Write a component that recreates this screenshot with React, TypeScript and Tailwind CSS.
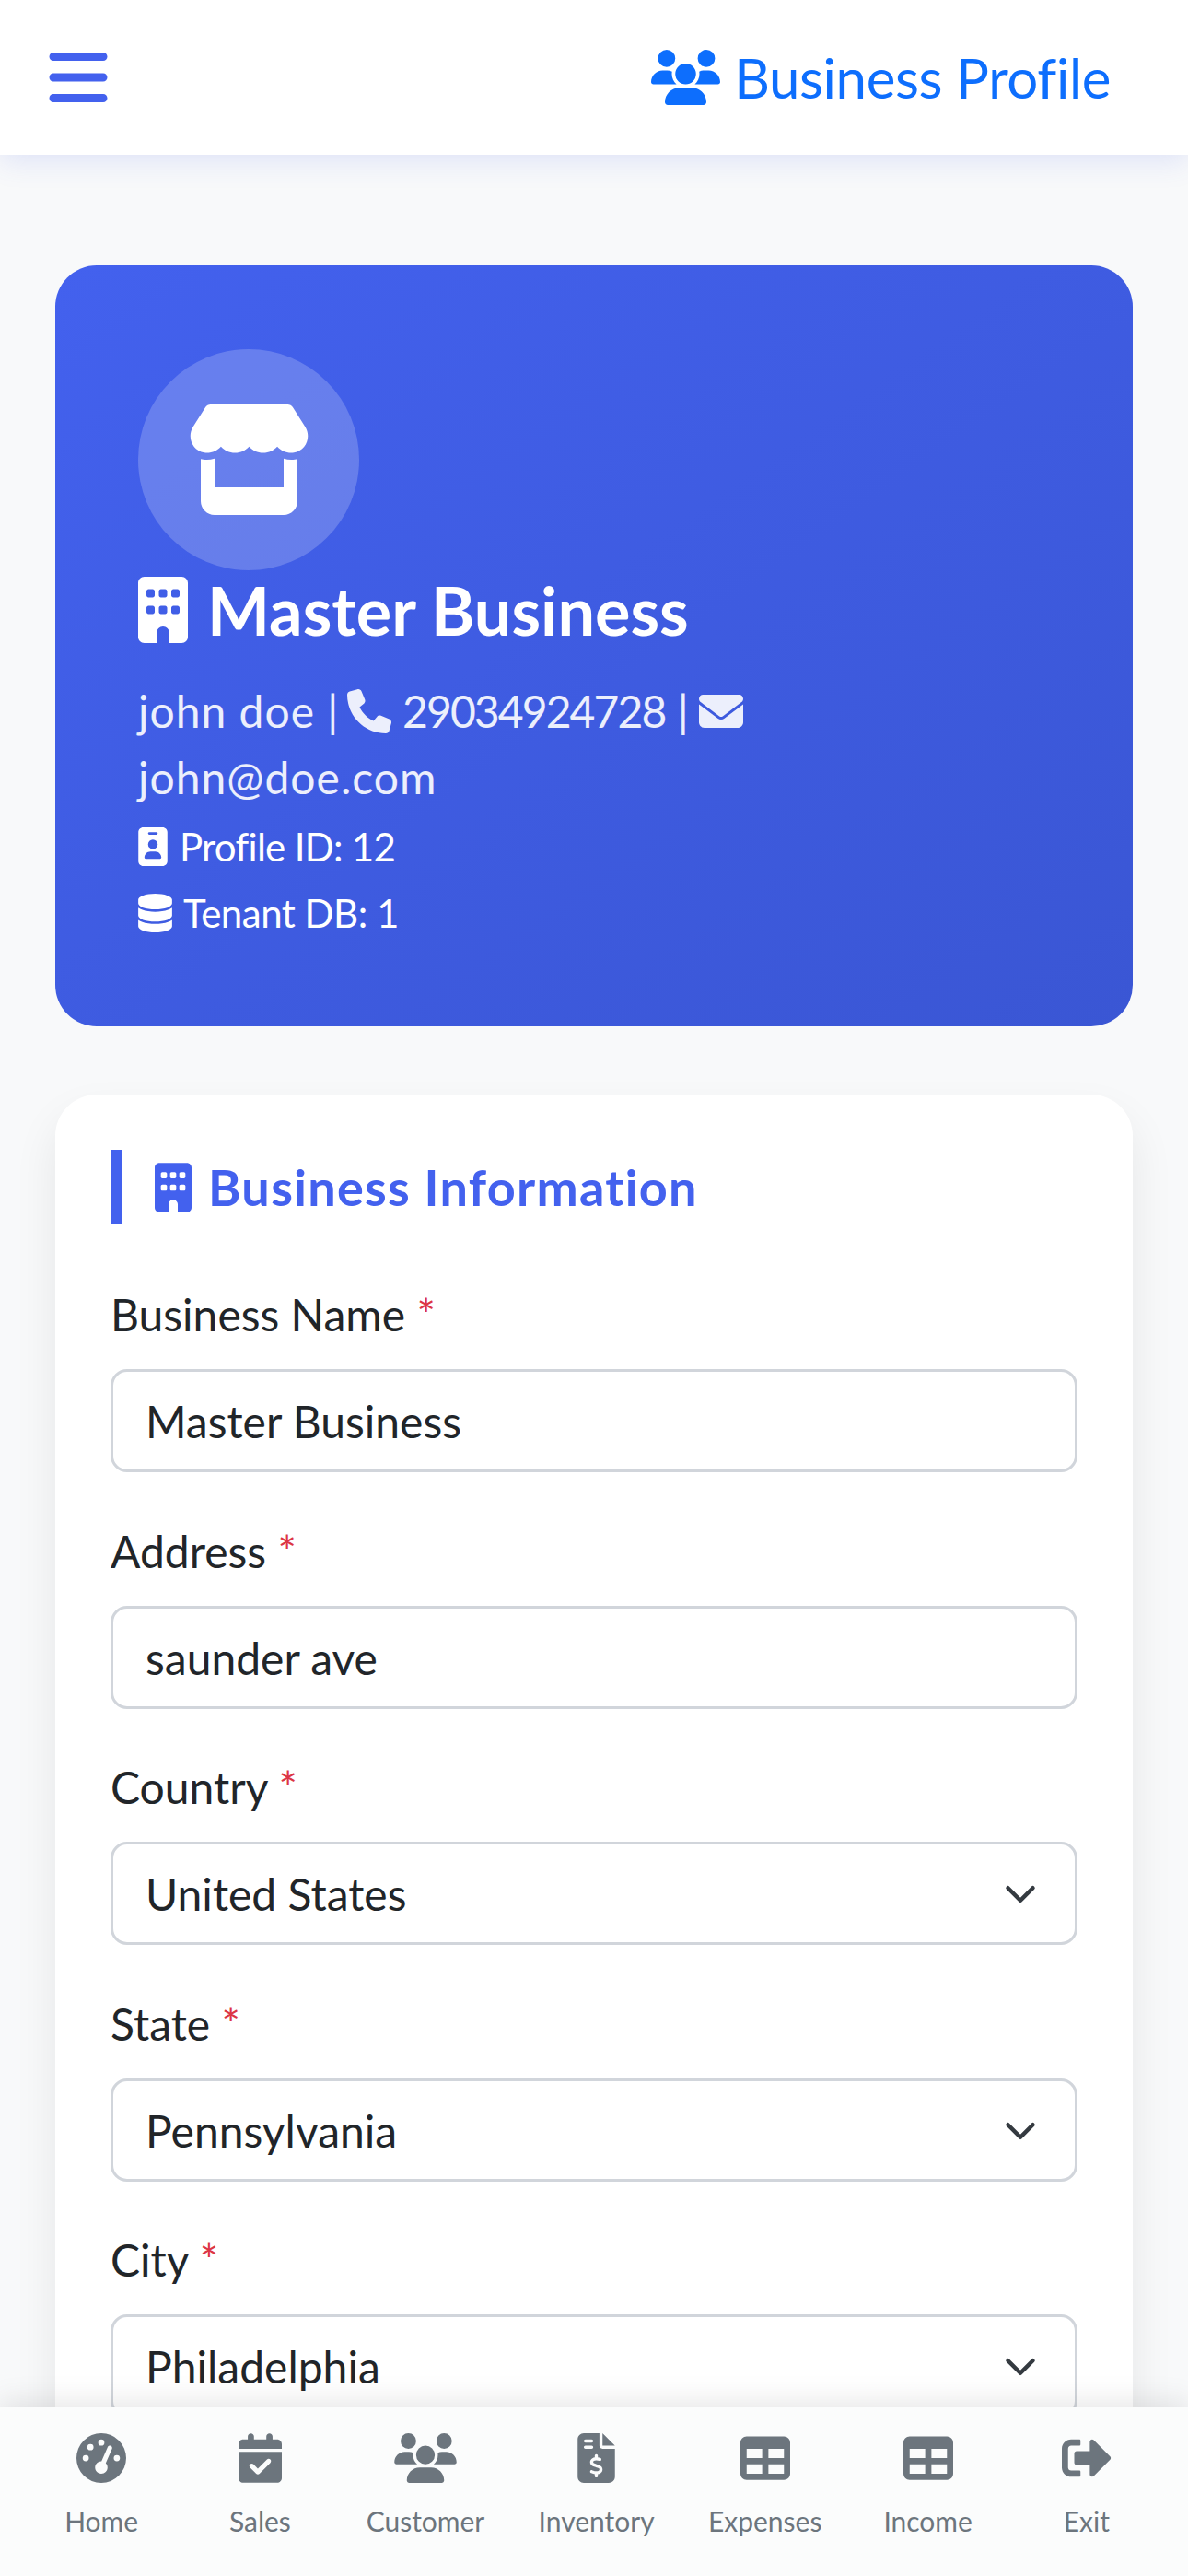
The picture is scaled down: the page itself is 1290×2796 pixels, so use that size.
import React from "react";
import {
  FaBars,
  FaBuilding,
  FaCalendarCheck,
  FaDatabase,
  FaEnvelope,
  FaFileInvoiceDollar,
  FaGaugeHigh,
  FaIdBadge,
  FaPhone,
  FaStore,
  FaTable,
  FaUsers,
} from "react-icons/fa6";
import { FaSignOutAlt } from "react-icons/fa";

// Page is a 430px mobile layout captured at 3x, so every number here is css px * 3
const FIELDS = [
  { label: "Business Name", value: "Master Business", select: false },
  { label: "Address", value: "saunder ave", select: false },
  { label: "Country", value: "United States", select: true },
  { label: "State", value: "Pennsylvania", select: true },
  { label: "City", value: "Philadelphia", select: true },
];

const NAV_ITEMS = [
  { label: "Home", icon: FaGaugeHigh, size: "w-[54px]" },
  { label: "Sales", icon: FaCalendarCheck, size: "w-[47px]" },
  { label: "Customer", icon: FaUsers, size: "w-[68px]" },
  { label: "Inventory", icon: FaFileInvoiceDollar, size: "w-[41px]" },
  { label: "Expenses", icon: FaTable, size: "w-[54px]" },
  { label: "Income", icon: FaTable, size: "w-[54px]" },
  { label: "Exit", icon: FaSignOutAlt, size: "w-[54px]" },
];

const Chevron = () => (
  <svg viewBox="0 0 16 16" className="w-[36px] h-[36px] shrink-0" fill="none">
    <path d="m2 5 6 6 6-6" stroke="#343a40" strokeWidth="2" strokeLinecap="round" strokeLinejoin="round" />
  </svg>
);

const Field = ({ label, value, select }: { label: string; value: string; select: boolean }) => (
  <div className="mb-[49.5px]">
    <div className="mb-[23px] text-[48px] leading-[72px] text-[#212529]">
      {label} <span className="text-[#dc3545]">*</span>
    </div>
    <div className="flex h-[112px] items-center justify-between rounded-[18px] border-[3px] border-[#d1d5db] bg-white pl-[35px] pr-[41px] pt-[2px] text-[48px] leading-[72px] text-[#212529]">
      <span>{value}</span>
      {select && <Chevron />}
    </div>
  </div>
);

export default function App() {
  return (
    <div className="relative flex h-[2796px] w-[1290px] flex-col overflow-hidden bg-[#f8f9fa] font-['Lato','Open_Sans',sans-serif] [font-variant-ligatures:none]">
      {/* Top bar */}
      <header className="relative z-10 flex h-[168px] shrink-0 items-center justify-between bg-white pl-[49px] pr-[84px] shadow-[0_6px_30px_rgba(67,97,238,0.15)]">
        <FaBars className="h-[72px] w-[72px] text-[#4361ee]" />
        <div className="flex items-center gap-[15px] text-[60px] leading-[72px] tracking-[-0.4px] text-[#0d6efd]">
          <FaUsers className="h-[60px] w-[75px]" />
          <span>Business Profile</span>
        </div>
      </header>

      <main className="flex-1 px-[60px] pt-[120px]">
        {/* Business summary */}
        <section className="mb-[74px] h-[826px] rounded-[45px] bg-gradient-to-br from-[#4361ee] to-[#3a56d4] px-[90px] pt-[91px] text-white">
          <div className="flex h-[240px] w-[240px] items-center justify-center rounded-full bg-white/20">
            <FaStore className="h-[120px] w-[135px]" />
          </div>
          <h2 className="mb-[31px] flex items-center gap-[21px] text-[72px] font-bold leading-[86px]">
            <FaBuilding className="h-[72px] w-[54px]" />
            <span>Master Business</span>
          </h2>
          <p className="text-[48px] leading-[72px] tracking-[1px] text-white/90">
            john doe | <FaPhone className="-ml-[5px] inline align-[-6px]" />
            <span className="ml-[2px] tracking-[-1.9px]"> 29034924728</span> |{" "}
            <FaEnvelope className="-ml-[3px] inline align-[-6px]" /> john@doe.com
          </p>
          <p className="mt-[3px] flex items-center gap-[13px] text-[42px] leading-[72px] tracking-[-0.7px]">
            <FaIdBadge className="h-[42px] w-[32px]" />
            <span>Profile ID: 12</span>
          </p>
          <p className="flex items-center gap-[12px] text-[42px] leading-[72px] tracking-[-0.5px]">
            <FaDatabase className="h-[42px] w-[37px]" />
            <span>Tenant DB: 1</span>
          </p>
        </section>

        {/* Form card */}
        <section className="rounded-[45px] bg-white p-[60px] shadow-[0_24px_48px_rgba(0,0,0,0.08)]">
          <h3 className="mb-[62px] flex h-[81px] items-center gap-[18px] border-l-[12px] border-[#4361ee] pl-[36px] text-[54px] font-bold tracking-[1.3px] text-[#4361ee]">
            <FaBuilding className="h-[54px] w-[40px]" />
            <span>Business Information</span>
          </h3>
          {FIELDS.map((field) => (
            <Field key={field.label} {...field} />
          ))}
        </section>
      </main>

      {/* Bottom nav sits over the scrolling form */}
      <nav className="absolute bottom-0 left-0 z-10 flex h-[183px] w-full justify-around bg-[#fbfcfc] px-[24px] pt-[28px] shadow-[0_-6px_30px_rgba(0,0,0,0.1)]">
        {NAV_ITEMS.map(({ label, icon: Icon, size }) => (
          <div key={label} className="flex min-w-[150px] flex-col items-center px-[18px] text-[#6c757d]">
            <Icon className={`h-[54px] ${size}`} />
            <span className="mt-[19px] text-[30px] leading-[45px]">{label}</span>
          </div>
        ))}
      </nav>
    </div>
  );
}
